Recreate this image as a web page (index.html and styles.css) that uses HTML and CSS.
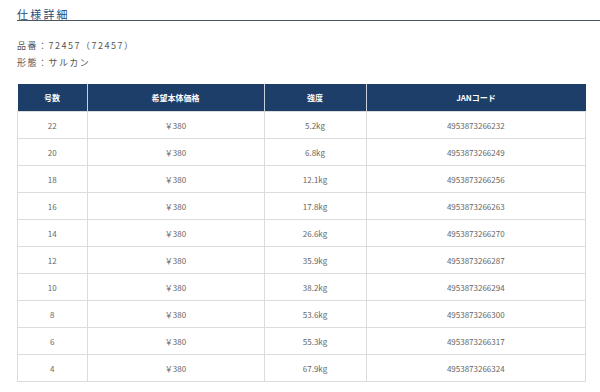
FILE: index.html
```html
<!DOCTYPE html>
<html lang="ja">
<head>
<meta charset="utf-8">
<link rel="stylesheet" href="styles.css">
</head>
<body>
<div class="page">
  <h2 class="title">仕様詳細</h2>
  <div class="info">
    <p>品番：72457（72457）</p>
    <p>形態：サルカン</p>
  </div>
  <table class="spec">
    <thead>
      <tr><th class="c1">号数</th><th class="c2">希望本体価格</th><th class="c3">強度</th><th class="c4">JANコード</th></tr>
    </thead>
    <tbody>
      <tr><td>22</td><td>￥380</td><td>5.2kg</td><td>4953873266232</td></tr>
      <tr><td>20</td><td>￥380</td><td>6.8kg</td><td>4953873266249</td></tr>
      <tr><td>18</td><td>￥380</td><td>12.1kg</td><td>4953873266256</td></tr>
      <tr><td>16</td><td>￥380</td><td>17.8kg</td><td>4953873266263</td></tr>
      <tr><td>14</td><td>￥380</td><td>26.6kg</td><td>4953873266270</td></tr>
      <tr><td>12</td><td>￥380</td><td>35.9kg</td><td>4953873266287</td></tr>
      <tr><td>10</td><td>￥380</td><td>38.2kg</td><td>4953873266294</td></tr>
      <tr><td>8</td><td>￥380</td><td>53.6kg</td><td>4953873266300</td></tr>
      <tr><td>6</td><td>￥380</td><td>55.3kg</td><td>4953873266317</td></tr>
      <tr><td>4</td><td>￥380</td><td>67.9kg</td><td>4953873266324</td></tr>
    </tbody>
  </table>
</div>
</body>
</html>
```
FILE: styles.css
```css
html, body { margin: 0; padding: 0; background: #fff; }
body { font-family: "Noto Sans CJK JP", "Noto Sans", sans-serif; color: #555; }
.page { padding: 8px 0 0 17px; }
.title {
  margin: 0;
  font-size: 11px;
  font-weight: normal;
  letter-spacing: 2.2px;
  color: #2a4a78;
  line-height: 12px;
  padding-bottom: 0;
  border-bottom: 1px solid #4e5864;
}
.info { margin-top: 16px; }
.info p {
  margin: 0;
  font-size: 9px;
  letter-spacing: 1.5px;
  line-height: 17px;
  color: #555;
}
.spec {
  margin-top: 13px;
  border-collapse: collapse;
  width: 565px;
  table-layout: fixed;
  font-size: 8px;
}
.spec th {
  background: #1d3e68;
  color: #fff;
  font-weight: bold;
  height: 27px;
  padding: 0;
  border-left: 1px solid #c8d0da;
}
.spec th:first-child { border-left: none; }
.spec td {
  height: 26px;
  padding: 0;
  text-align: center;
  border: 1px solid #dcdcdc;
  color: #666;
}
.c1 { width: 69px; }
.c2 { width: 176px; }
.c3 { width: 101px; }
.c4 { width: 219px; }
```
